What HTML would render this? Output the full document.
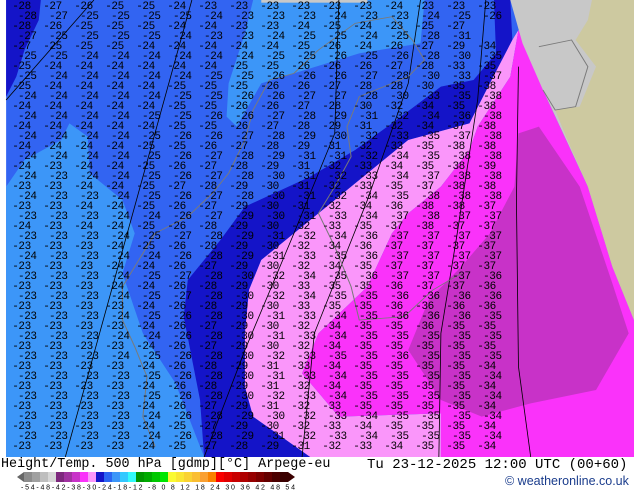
<!DOCTYPE html>
<html><head><meta charset="utf-8"><style>
html,body{margin:0;padding:0;width:634px;height:490px;overflow:hidden;background:#fff;font-family:"Liberation Sans",sans-serif}
#map{position:absolute;left:0;top:0;width:634px;height:457px;overflow:hidden}
.r{position:absolute;font-family:"Liberation Mono",monospace;font-size:11px;line-height:11px;color:#000;white-space:pre;letter-spacing:-0.4px}
.b{position:absolute;white-space:nowrap}
</style></head><body>
<div id="map">
<svg width="634" height="457" viewBox="0 0 1553 1371" preserveAspectRatio="none" style="position:absolute;left:0;top:0">
<rect x="0" y="0" width="1553" height="1371" fill="#3264f2"/>
<rect x="0" y="0" width="15" height="1371" fill="#fff"/>
<polygon points="15,0 100,0 95,60 60,150 40,230 15,290" fill="#1414c8"/>
<polygon points="620,0 1040,0 1030,130 880,160 640,250 580,380 555,350 560,250 600,100" fill="#3c96f8"/>
<polygon points="15,560 60,480 150,420 170,370 215,410 220,520 300,600 330,700 300,820 350,1000 430,1150 500,1371 15,1371" fill="#3c96f8"/>
<polygon points="1210,0 1250,0 1255,120 1200,250 1150,370 1000,420 900,520 720,700 640,780 610,870 600,1000 600,1160 620,1250 760,1371 500,1371 490,1200 450,950 460,840 540,720 600,620 760,530 870,450 960,370 1080,260 1160,240 1215,160" fill="#1414c8"/>
<polygon points="1255,120 1270,90 1250,230 1170,380 1150,450 1080,560 1000,640 960,700 900,860 780,1000 740,1120 830,1250 1080,1240 1080,1371 760,1371 620,1250 600,1160 600,1000 610,870 640,780 720,700 900,520 1000,420 1150,370 1200,250" fill="#fa96fa"/>
<polygon points="1270,90 1290,130 1330,270 1440,560 1500,800 1553,960 1553,1371 1080,1371 1080,1240 830,1250 740,1120 780,1000 900,860 960,700 1000,640 1080,560 1150,450 1170,380 1250,230" fill="#fa32fa"/>
<polygon points="1270,400 1320,380 1420,560 1500,850 1540,1000 1460,1170 1300,1210 1180,1250 1080,1200 1000,1050 1050,900 1130,800 1200,700 1260,560" fill="#c832c8"/>
<polygon points="1250,0 1553,0 1553,960 1500,800 1440,560 1330,270 1280,130" fill="#c8c8c8"/>
<polygon points="1450,0 1553,0 1553,960 1500,800 1440,560 1390,420 1360,330 1420,320 1460,200 1410,120 1440,60" fill="#cdc9a0"/>
<rect x="640" y="0" width="260" height="8" fill="#c8c8c8"/>
<g fill="none" stroke="#000" stroke-width="2">
<path d="M15,300 L230,0"/><path d="M160,1371 L470,0"/>
<path d="M500,1371 L600,1050 L720,700 L820,400 L830,0"/>
<path d="M740,1371 L770,1000 L900,600 L1000,250 L1030,0"/>
<path d="M1075,1371 L1080,1000 L1120,700 L1170,300 L1190,0"/>
<path d="M1300,1371 L1270,1100 L1265,600 L1270,200"/>
</g>
<g fill="none" stroke="#7a7a7a" stroke-width="2.5">
<path d="M660,240 L720,220 L780,150 L870,70 L960,50 L1010,120 L1040,180 L1000,230 L880,290 L850,380 L860,470 L820,560 L780,640 L820,740 L860,860 L880,960 L990,950 L1060,870 L1130,820"/>
<path d="M660,240 L620,330 L600,420 L560,520 L520,580 L460,650 L380,700 L340,780 L300,860 L300,960 L330,1040 L360,1130 L350,1250 L380,1340"/>
<path d="M1320,140 L1400,120 L1440,200 L1410,320 L1360,330 L1330,270"/>
</g>
</svg>
<div class="r" style="left:6px;top:2px"> -28  -27  -26  -25  -25  -24  -23  -23  -23  -23  -23  -23  -24  -23  -23  -23</div>
<div class="r" style="left:18px;top:12px">-28  -27  -25  -25  -25  -25  -24  -23  -23  -23  -24  -23  -23  -24  -25  -26</div>
<div class="r" style="left:6px;top:22px"> -28  -26  -25  -25  -25  -24  -24  -23  -23  -24  -25  -24  -23  -25  -27</div>
<div class="r" style="left:18px;top:32px">-27  -25  -25  -25  -25  -24  -23  -23  -24  -25  -25  -24  -25  -28  -31</div>
<div class="r" style="left:6px;top:42px"> -27  -25  -25  -25  -24  -24  -24  -24  -24  -25  -26  -24  -26  -27  -29  -34</div>
<div class="r" style="left:18px;top:52px">-25  -25  -24  -24  -24  -24  -24  -24  -25  -25  -26  -25  -26  -28  -30  -35</div>
<div class="r" style="left:6px;top:62px"> -25  -24  -24  -24  -24  -24  -24  -25  -25  -26  -26  -26  -27  -28  -33  -35</div>
<div class="r" style="left:18px;top:72px">-25  -24  -24  -24  -24  -24  -25  -25  -26  -26  -26  -27  -28  -30  -33  -37</div>
<div class="r" style="left:6px;top:82px"> -25  -24  -24  -24  -24  -25  -25  -25  -26  -26  -27  -28  -28  -30  -35  -38</div>
<div class="r" style="left:18px;top:92px">-24  -24  -24  -24  -24  -25  -25  -26  -26  -27  -27  -28  -30  -33  -35  -38</div>
<div class="r" style="left:6px;top:102px"> -24  -24  -24  -24  -24  -25  -25  -26  -26  -27  -28  -30  -32  -34  -35  -38</div>
<div class="r" style="left:18px;top:112px">-24  -24  -24  -24  -25  -25  -26  -26  -27  -28  -29  -31  -32  -34  -36  -38</div>
<div class="r" style="left:6px;top:122px"> -24  -24  -24  -24  -24  -25  -25  -26  -27  -28  -29  -31  -32  -34  -37  -38</div>
<div class="r" style="left:18px;top:132px">-24  -24  -24  -24  -25  -26  -26  -27  -28  -29  -30  -32  -33  -35  -37  -38</div>
<div class="r" style="left:6px;top:142px"> -24  -24  -24  -24  -25  -25  -26  -27  -28  -29  -31  -32  -33  -35  -38  -38</div>
<div class="r" style="left:18px;top:152px">-24  -24  -24  -24  -25  -26  -27  -28  -29  -31  -31  -32  -34  -35  -38  -38</div>
<div class="r" style="left:6px;top:162px"> -24  -23  -24  -24  -25  -26  -27  -28  -29  -31  -32  -33  -34  -35  -38  -39</div>
<div class="r" style="left:18px;top:172px">-24  -23  -24  -24  -25  -26  -27  -28  -30  -31  -32  -33  -34  -37  -38  -38</div>
<div class="r" style="left:6px;top:182px"> -23  -23  -24  -24  -25  -27  -28  -29  -30  -31  -32  -33  -35  -37  -38  -38</div>
<div class="r" style="left:18px;top:192px">-24  -23  -23  -24  -25  -26  -27  -28  -30  -31  -32  -34  -35  -38  -38  -38</div>
<div class="r" style="left:6px;top:202px"> -23  -23  -24  -24  -25  -26  -27  -29  -30  -31  -32  -34  -36  -38  -38  -37</div>
<div class="r" style="left:18px;top:212px">-23  -23  -23  -24  -24  -26  -27  -29  -30  -31  -33  -34  -37  -38  -37  -37</div>
<div class="r" style="left:6px;top:222px"> -24  -23  -24  -24  -25  -26  -28  -29  -30  -32  -33  -35  -37  -38  -37  -37</div>
<div class="r" style="left:18px;top:232px">-23  -23  -23  -24  -25  -27  -28  -29  -31  -32  -34  -36  -37  -37  -37  -37</div>
<div class="r" style="left:6px;top:242px"> -23  -23  -23  -24  -25  -26  -28  -29  -30  -32  -34  -36  -37  -37  -37  -37</div>
<div class="r" style="left:18px;top:252px">-24  -23  -23  -24  -24  -26  -28  -29  -31  -33  -35  -36  -37  -37  -37  -37</div>
<div class="r" style="left:6px;top:262px"> -23  -23  -23  -24  -24  -26  -27  -29  -30  -32  -34  -35  -37  -37  -37  -37</div>
<div class="r" style="left:18px;top:272px">-23  -23  -23  -24  -25  -27  -28  -30  -32  -34  -35  -36  -37  -37  -37  -36</div>
<div class="r" style="left:6px;top:282px"> -23  -23  -23  -24  -24  -26  -28  -29  -30  -33  -35  -35  -36  -37  -37  -36</div>
<div class="r" style="left:18px;top:292px">-23  -23  -23  -24  -25  -27  -28  -30  -32  -34  -35  -35  -36  -36  -36  -36</div>
<div class="r" style="left:6px;top:302px"> -23  -23  -23  -23  -24  -26  -28  -29  -30  -33  -35  -35  -36  -36  -36  -36</div>
<div class="r" style="left:18px;top:312px">-23  -23  -23  -24  -25  -26  -28  -30  -31  -33  -34  -35  -36  -36  -36  -35</div>
<div class="r" style="left:6px;top:322px"> -23  -23  -23  -23  -24  -26  -27  -29  -30  -32  -34  -35  -35  -36  -35  -35</div>
<div class="r" style="left:18px;top:332px">-23  -23  -23  -24  -24  -26  -28  -30  -31  -33  -34  -35  -35  -35  -35  -35</div>
<div class="r" style="left:6px;top:342px"> -23  -23  -23  -23  -24  -26  -27  -29  -30  -32  -34  -35  -35  -35  -35  -35</div>
<div class="r" style="left:18px;top:352px">-23  -23  -23  -24  -25  -26  -28  -30  -32  -33  -35  -35  -36  -35  -35  -35</div>
<div class="r" style="left:6px;top:362px"> -23  -23  -23  -23  -24  -26  -28  -29  -31  -33  -34  -35  -35  -35  -35  -34</div>
<div class="r" style="left:18px;top:372px">-23  -23  -23  -23  -25  -26  -28  -30  -31  -33  -34  -35  -35  -35  -35  -34</div>
<div class="r" style="left:6px;top:382px"> -23  -23  -23  -23  -24  -26  -28  -29  -31  -32  -34  -35  -35  -35  -35  -34</div>
<div class="r" style="left:18px;top:392px">-23  -23  -23  -23  -25  -26  -28  -30  -32  -33  -34  -35  -35  -35  -35  -34</div>
<div class="r" style="left:6px;top:402px"> -23  -23  -23  -23  -24  -26  -27  -29  -31  -32  -33  -35  -35  -35  -35  -34</div>
<div class="r" style="left:18px;top:412px">-23  -23  -23  -23  -24  -26  -28  -29  -30  -32  -33  -34  -35  -35  -35  -34</div>
<div class="r" style="left:6px;top:422px"> -23  -23  -23  -23  -24  -25  -27  -29  -30  -32  -33  -34  -35  -35  -35  -34</div>
<div class="r" style="left:18px;top:432px">-23  -23  -23  -23  -24  -26  -28  -29  -31  -32  -33  -34  -35  -35  -35  -34</div>
<div class="r" style="left:6px;top:442px"> -23  -23  -23  -23  -24  -25  -27  -28  -29  -31  -32  -33  -34  -35  -35  -34</div>
</div>
<div class="b" style="left:1px;top:457px;font-family:'Liberation Mono',monospace;font-size:13.4px;color:#000">Height/Temp. 500 hPa [gdmp][°C] Arpege-eu</div>
<div class="b" style="left:367px;top:457px;font-family:'Liberation Mono',monospace;font-size:14px;color:#000">Tu 23-12-2025 12:00 UTC (00+60)</div>
<div class="b" style="left:505px;top:474px;font-size:12.5px;color:#1a3c8c">© weatheronline.co.uk</div>
<svg style="position:absolute;left:0;top:472px" width="300" height="18">
<polygon points="17,5 24,0 24,10" fill="#666"/>
<g>
<rect x="24" y="0" width="8" height="10" fill="#8c8c8c"/><rect x="32" y="0" width="8" height="10" fill="#a0a0a0"/><rect x="40" y="0" width="8" height="10" fill="#bebebe"/><rect x="48" y="0" width="8" height="10" fill="#d7d7d7"/>
<rect x="56" y="0" width="8" height="10" fill="#7d287d"/><rect x="64" y="0" width="8" height="10" fill="#a032a0"/><rect x="72" y="0" width="8" height="10" fill="#c832c8"/><rect x="80" y="0" width="8" height="10" fill="#fa32fa"/><rect x="88" y="0" width="8" height="10" fill="#fa96fa"/>
<rect x="96" y="0" width="8" height="10" fill="#1414c8"/><rect x="104" y="0" width="8" height="10" fill="#2a64f2"/><rect x="112" y="0" width="8" height="10" fill="#3c96f8"/><rect x="120" y="0" width="8" height="10" fill="#32c8ff"/><rect x="128" y="0" width="8" height="10" fill="#32fafa"/>
<rect x="136" y="0" width="8" height="10" fill="#009600"/><rect x="144" y="0" width="8" height="10" fill="#00aa00"/><rect x="152" y="0" width="8" height="10" fill="#00c800"/><rect x="160" y="0" width="8" height="10" fill="#00e600"/>
<rect x="168" y="0" width="8" height="10" fill="#fafa32"/><rect x="176" y="0" width="8" height="10" fill="#fae632"/><rect x="184" y="0" width="8" height="10" fill="#fad232"/><rect x="192" y="0" width="8" height="10" fill="#fabe32"/><rect x="200" y="0" width="8" height="10" fill="#faa032"/><rect x="208" y="0" width="8" height="10" fill="#fa8200"/>
<rect x="216" y="0" width="8" height="10" fill="#fa0000"/><rect x="224" y="0" width="8" height="10" fill="#e10000"/><rect x="232" y="0" width="8" height="10" fill="#c80000"/><rect x="240" y="0" width="8" height="10" fill="#af0000"/><rect x="248" y="0" width="8" height="10" fill="#960000"/><rect x="256" y="0" width="8" height="10" fill="#7d0000"/><rect x="264" y="0" width="8" height="10" fill="#640000"/><rect x="272" y="0" width="8" height="10" fill="#4b0000"/><rect x="280" y="0" width="8" height="10" fill="#3a0000"/>
</g>
<polygon points="288,0 295,5 288,10" fill="#3a0000"/>
<text x="21" y="17.5" font-family="Liberation Sans" font-size="7" fill="#000" textLength="274" lengthAdjust="spacing">-54-48-42-38-30-24-18-12 -8   0   8   12  18  24  30  36  42  48  54</text>
</svg>
</body></html>
